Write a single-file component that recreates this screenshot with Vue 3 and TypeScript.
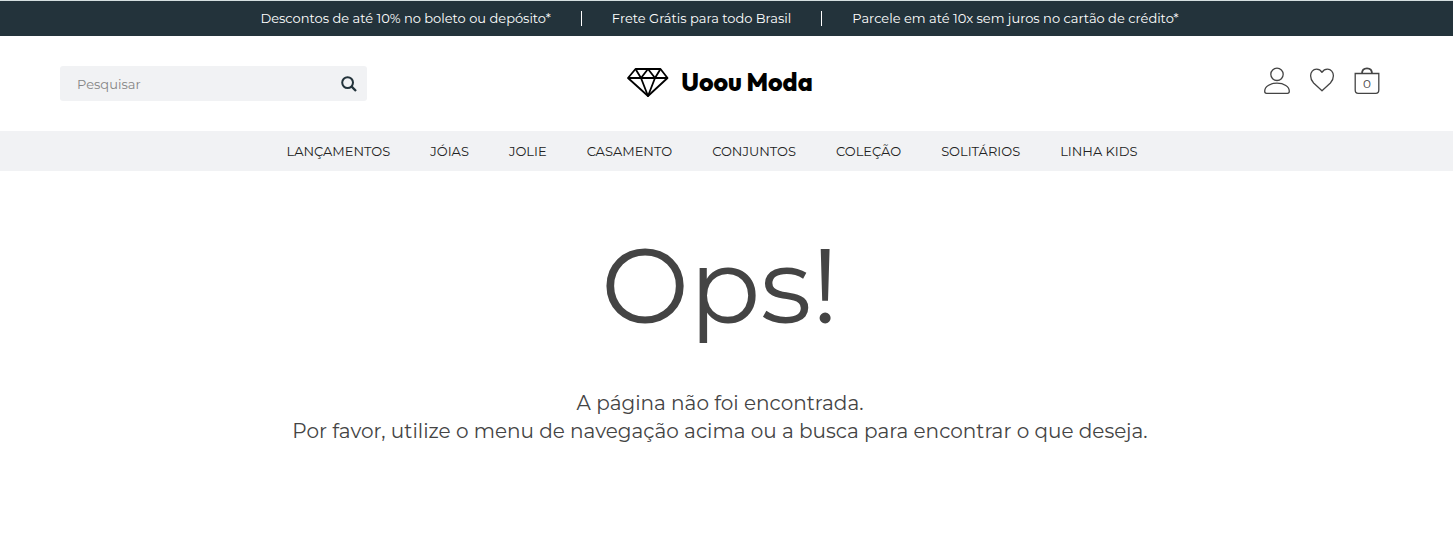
<script setup lang="ts">
import { ref } from 'vue'

const notices: string[] = [
  'Descontos de até 10% no boleto ou depósito*',
  'Frete Grátis para todo Brasil',
  'Parcele em até 10x sem juros no cartão de crédito*',
]

const categories: string[] = [
  'LANÇAMENTOS',
  'JÓIAS',
  'JOLIE',
  'CASAMENTO',
  'CONJUNTOS',
  'COLEÇÃO',
  'SOLITÁRIOS',
  'LINHA KIDS',
]

const query = ref('')
const cartCount = ref(0)
</script>

<template>
  <div class="page">
    <div class="notices">
      <ul class="notice-list">
        <li v-for="notice in notices" :key="notice" class="notice">{{ notice }}</li>
      </ul>
    </div>

    <header class="header">
      <form class="search" role="search" @submit.prevent>
        <input v-model="query" class="search-input" type="search" placeholder="Pesquisar" aria-label="Pesquisar" />
        <button class="search-button" type="submit" aria-label="Buscar">
          <svg width="16" height="16" viewBox="0 0 16 16" fill="none" stroke="currentColor" stroke-width="2">
            <circle cx="6.6" cy="6.6" r="5.4" />
            <path d="M10.4 10.4 15 15" stroke-width="2.3" />
          </svg>
        </button>
      </form>

      <a class="logo" href="#" aria-label="Uoou Moda">
        <svg width="42" height="29" viewBox="0 0 42 29" fill="none" stroke="currentColor" stroke-width="1.8" stroke-linejoin="round">
          <path d="M8.5 1H33.5L40.5 10L21 28L1 10Z" />
          <path d="M1 10H40.5M8.5 1L14 10L21 1L28 10L33.5 1M14 10L21 28L28 10" />
        </svg>
        <span class="logo-text">Uoou Moda</span>
      </a>

      <div class="actions">
        <a class="action" href="#" aria-label="Minha conta">
          <svg width="28" height="28" viewBox="0 0 28 28" fill="none" stroke="currentColor" stroke-width="1.3">
            <circle cx="14" cy="7.3" r="6.2" />
            <path d="M1.7 24.3C1.7 19.5 7 16.2 14 16.2S26.3 19.5 26.3 24.3C26.3 25.7 25.8 26.3 24.5 26.3H3.5C2.2 26.3 1.7 25.7 1.7 24.3Z" />
          </svg>
        </a>
        <a class="action" href="#" aria-label="Favoritos">
          <svg width="27" height="28" viewBox="0 0 27 28" fill="none" stroke="currentColor" stroke-width="1.3" stroke-linejoin="round">
            <path d="M13 23.7L4.6 16C2.3 13.6 1.6 11.3 1.6 8.8C1.6 5.2 4 2.2 7.5 2.2C10.2 2.2 12 3.7 13 5.3C14 3.7 15.8 2.2 18.5 2.2C22 2.2 24.4 5.2 24.4 8.8C24.4 11.3 23.7 13.6 21.4 16Z" />
          </svg>
        </a>
        <a class="action cart" href="#" aria-label="Carrinho">
          <svg width="26" height="28" viewBox="0 0 26 28" fill="none" stroke="currentColor" stroke-width="1.3">
            <path d="M1.2 6.5H24.8V23C24.8 25.2 23.8 26.3 21.8 26.3H4.2C2.2 26.3 1.2 25.2 1.2 23Z" />
            <path d="M8 6.5C8 3.2 10 1.3 13 1.3S18 3.2 18 6.5" stroke-width="1.8" />
          </svg>
          <span class="cart-count">{{ cartCount }}</span>
        </a>
      </div>
    </header>

    <nav class="nav" aria-label="Categorias">
      <a v-for="category in categories" :key="category" class="nav-link" href="#">{{ category }}</a>
    </nav>

    <main class="content">
      <h1 class="title">Ops!</h1>
      <p class="message">
        A página não foi encontrada.<br />
        Por favor, utilize o menu de navegação acima ou a busca para encontrar o que deseja.
      </p>
    </main>
  </div>
</template>

<style>
body {
  margin: 0;
  background: #fff;
}
</style>

<style scoped>
.page {
  font-family: Montserrat, Inter, 'Open Sans', sans-serif;
  color: #444;
}

.notices {
  box-sizing: border-box;
  height: 36px;
  padding-right: 14px;
  border-top: 1px solid #d5dfe0;
  background: #23333b;
  color: #fff;
}

.notice-list {
  display: flex;
  justify-content: center;
  margin: 0;
  padding: 10px 0;
  list-style: none;
}

.notice {
  padding: 0 30px;
  font-size: 13px;
  line-height: 15px;
  white-space: nowrap;
}

.notice + .notice {
  border-left: 1px solid #fff;
}

.header {
  display: grid;
  grid-template-columns: 1fr auto 1fr;
  align-items: start;
  padding: 30px 73px 30px 60px;
}

.search {
  display: flex;
  width: 307px;
  height: 35px;
  border-radius: 3px;
  background: #f1f2f4;
}

.search-input {
  flex: 1;
  min-width: 0;
  padding: 0 0 0 17px;
  border: 0;
  outline: 0;
  background: transparent;
  color: #444;
  font-family: inherit;
  font-size: 13px;
}

.search-input::placeholder {
  color: #858585;
  opacity: 1;
}

.search-button {
  display: flex;
  align-items: center;
  padding: 0 10px;
  border: 0;
  background: transparent;
  color: #23333b;
  cursor: pointer;
}

.logo {
  display: flex;
  align-items: center;
  gap: 12px;
  height: 32px;
  color: #000;
  text-decoration: none;
}

.logo-text {
  font-family: Outfit, Urbanist, Lexend, 'League Spartan', Montserrat, sans-serif;
  font-size: 25px;
  font-weight: 800;
  line-height: 32px;
}

.actions {
  display: flex;
  justify-content: flex-end;
  gap: 18px;
}

.action {
  position: relative;
  display: flex;
  padding-top: 1px;
  color: #444;
  text-decoration: none;
}

.cart-count {
  position: absolute;
  inset: 10px 0 auto;
  font-size: 12px;
  line-height: 16px;
  text-align: center;
}

.nav {
  display: flex;
  justify-content: center;
  gap: 40px;
  height: 40px;
  padding-right: 29px;
  background: #f1f2f4;
}

.nav-link {
  color: #222;
  font-size: 13px;
  line-height: 41px;
  text-decoration: none;
  white-space: nowrap;
}

.content {
  padding: 48px 13px 50px 0;
  text-align: center;
}

.title {
  margin: 0;
  font-size: 105px;
  font-weight: 400;
  line-height: 132px;
}

.message {
  margin: 38px 0 0;
  font-size: 20px;
  font-weight: 400;
  line-height: 28px;
}
</style>
